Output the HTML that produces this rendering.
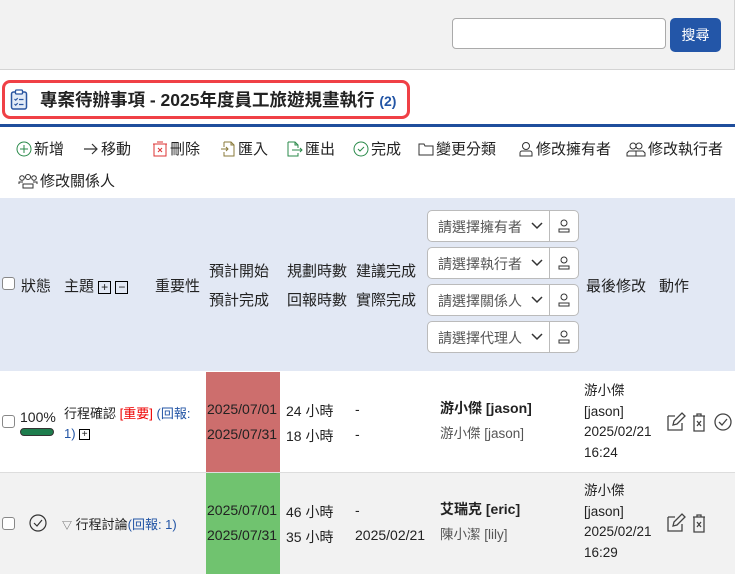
<!DOCTYPE html>
<html><head><meta charset="utf-8"><style>
*{box-sizing:border-box;margin:0;padding:0}
body{width:735px;height:574px;overflow:hidden;background:#fff;font-family:"Liberation Sans","Noto Sans CJK TC",sans-serif;font-size:15px;color:#222;position:relative}
.a{position:absolute;white-space:nowrap}
.cb{position:absolute;width:13px;height:13px;border:1px solid #888;border-radius:3px;background:#fff}
.sel{position:absolute;left:427px;width:152px;height:32px;border:1px solid #bbb;border-radius:5px;background:#fff}
.sel span{position:absolute;left:10px;top:6px;color:#555;font-size:14px}
.sel .dv{position:absolute;left:121px;top:0;width:1px;height:30px;background:#bbb}
.sel svg{position:absolute}
.sq{display:inline-block;width:13px;height:13px;border:1px solid #000;font-size:12px;line-height:10px;text-align:center;vertical-align:middle}
.bl{color:#2355a5}
.tb{position:absolute;white-space:nowrap;font-size:15px}
.tb svg{vertical-align:-3px;margin-right:2px}
.d{font-size:14px}
</style></head><body>
<div class="a" style="left:0;top:0;width:735px;height:70px;background:#f2f2f2;border-bottom:1px solid #d4d4d4;border-right:1px solid #d4d4d4"></div>
<div class="a" style="left:452px;top:18px;width:214px;height:31px;background:#fff;border:1px solid #aaa;border-radius:4px"></div>
<div class="a" style="left:670px;top:18px;width:51px;height:34px;background:#2356a8;border-radius:5px;color:#fff;font-size:14px;text-align:center;line-height:34px">搜尋</div>

<div class="a" style="left:2px;top:80px;width:408px;height:39px;border:3px solid #f04046;border-radius:8px"></div>
<svg class="a" style="left:10px;top:89px" width="18" height="22" viewBox="0 0 18 22"><rect x="1.5" y="3" width="15" height="17" rx="2" fill="#e3ebf7" stroke="#2a55a0" stroke-width="1.5"/><rect x="5.5" y="1" width="7" height="4" rx="1" fill="#fff" stroke="#2a55a0" stroke-width="1.3"/><path d="M4.5 10l1.2 1.2 2-2M4.5 15l1.2 1.2 2-2M9 10.5h4.5M9 15.5h4.5" stroke="#2a55a0" stroke-width="1.2" fill="none"/></svg>
<div class="a" style="left:40px;top:87px;font-size:17.5px;font-weight:bold;color:#222">專案待辦事項 - 2025年度員工旅遊規畫執行 <span class="bl" style="font-size:14px">(2)</span></div>
<div class="a" style="left:0;top:124px;width:735px;height:3px;background:#1f4e9c"></div>

<!-- toolbar -->
<div class="tb" style="left:16px;top:138px"><svg width="16" height="16"><circle cx="8" cy="8" r="7" stroke="#2a8a4a" fill="none"/><path d="M8 4v8M4 8h8" stroke="#2a8a4a"/></svg>新增</div>
<div class="tb" style="left:83px;top:138px"><svg width="16" height="16"><path d="M1 8h13M9 3l5 5-5 5" stroke="#333" stroke-width="1.2" fill="none"/></svg>移動</div>
<div class="tb" style="left:152px;top:138px"><svg width="16" height="16"><rect x="2" y="3" width="12" height="12" stroke="#d33" fill="none"/><path d="M5 1h6M1 3h14M6 7l4 4M10 7l-4 4" stroke="#d33" fill="none"/></svg>刪除</div>
<div class="tb" style="left:220px;top:138px"><svg width="16" height="16"><path d="M4 1h7l3 3v11H4v-4M4 6V1M11 1v3h3M1 8h7M6 6l2 2-2 2" stroke="#8a7a3a" fill="none"/></svg>匯入</div>
<div class="tb" style="left:286px;top:138px"><svg width="17" height="16"><path d="M2 1h7l3 3v3M2 1v14h10v-3M9 1v3h3M6 9h10M14 7l2 2-2 2" stroke="#2a8a4a" fill="none"/></svg>匯出</div>
<div class="tb" style="left:353px;top:138px"><svg width="16" height="16"><circle cx="8" cy="8" r="7" stroke="#2a8a4a" fill="none"/><path d="M5 8l2 2 4-4" stroke="#2a8a4a" fill="none"/></svg>完成</div>
<div class="tb" style="left:418px;top:138px"><svg width="16" height="16"><path d="M1 3h5l1 2h8v9H1z" stroke="#333" fill="none"/></svg>變更分類</div>
<div class="tb" style="left:518px;top:138px"><svg width="16" height="16"><circle cx="8" cy="5" r="3.5" stroke="#333" fill="none"/><path d="M2 15v-3a2 2 0 0 1 2-2h8a2 2 0 0 1 2 2v3z" stroke="#333" fill="none"/></svg>修改擁有者</div>
<div class="tb" style="left:626px;top:138px"><svg width="20" height="16"><circle cx="7" cy="5" r="3" stroke="#333" fill="none"/><circle cx="13" cy="5" r="3" stroke="#333" fill="none"/><path d="M1 15v-3l2-2h14l2 2v3zM10 10v5" stroke="#333" fill="none"/></svg>修改執行者</div>
<div class="tb" style="left:18px;top:170px"><svg width="20" height="16"><circle cx="4" cy="5" r="2.3" stroke="#333" fill="none"/><circle cx="10" cy="4" r="2.5" stroke="#333" fill="none"/><circle cx="16" cy="5" r="2.3" stroke="#333" fill="none"/><path d="M1 11v-2h4M19 11v-2h-4M5 15v-4h10v4z" stroke="#333" fill="none"/></svg>修改關係人</div>

<!-- header -->
<div class="a" style="left:0;top:198px;width:735px;height:173px;background:#e2e8f4"></div>
<div class="cb" style="left:2px;top:277px"></div>
<div class="a" style="left:21px;top:275px">狀態</div>
<div class="a" style="left:64px;top:275px">主題 <span class="sq">+</span> <span class="sq">−</span></div>
<div class="a" style="left:155px;top:275px">重要性</div>
<div class="a" style="left:209px;top:260px">預計開始</div>
<div class="a" style="left:209px;top:289px">預計完成</div>
<div class="a" style="left:287px;top:260px">規劃時數</div>
<div class="a" style="left:287px;top:289px">回報時數</div>
<div class="a" style="left:356px;top:260px">建議完成</div>
<div class="a" style="left:356px;top:289px">實際完成</div>
<div class="a" style="left:586px;top:275px">最後修改</div>
<div class="a" style="left:659px;top:275px">動作</div>

<div class="sel" style="top:210px"><span>請選擇擁有者</span><div class="dv"></div><svg style="left:103px;top:11px" width="12" height="8"><path d="M1 1l5 5 5-5" stroke="#333" stroke-width="1.5" fill="none"/></svg><svg style="left:129px;top:8px" width="14" height="15"><circle cx="7" cy="4" r="3" stroke="#333" fill="none"/><path d="M2 13v-3h10v3z" stroke="#333" fill="none"/></svg></div>
<div class="sel" style="top:247px"><span>請選擇執行者</span><div class="dv"></div><svg style="left:103px;top:11px" width="12" height="8"><path d="M1 1l5 5 5-5" stroke="#333" stroke-width="1.5" fill="none"/></svg><svg style="left:129px;top:8px" width="14" height="15"><circle cx="7" cy="4" r="3" stroke="#333" fill="none"/><path d="M2 13v-3h10v3z" stroke="#333" fill="none"/></svg></div>
<div class="sel" style="top:284px"><span>請選擇關係人</span><div class="dv"></div><svg style="left:103px;top:11px" width="12" height="8"><path d="M1 1l5 5 5-5" stroke="#333" stroke-width="1.5" fill="none"/></svg><svg style="left:129px;top:8px" width="14" height="15"><circle cx="7" cy="4" r="3" stroke="#333" fill="none"/><path d="M2 13v-3h10v3z" stroke="#333" fill="none"/></svg></div>
<div class="sel" style="top:321px"><span>請選擇代理人</span><div class="dv"></div><svg style="left:103px;top:11px" width="12" height="8"><path d="M1 1l5 5 5-5" stroke="#333" stroke-width="1.5" fill="none"/></svg><svg style="left:129px;top:8px" width="14" height="15"><circle cx="7" cy="4" r="3" stroke="#333" fill="none"/><path d="M2 13v-3h10v3z" stroke="#333" fill="none"/></svg></div>

<!-- row1 -->
<div class="a" style="left:0;top:472px;width:735px;height:1px;background:#ddd"></div>
<div class="a" style="left:206px;top:372px;width:74px;height:100px;background:#cd6e6d"></div>
<div class="cb" style="left:2px;top:415px"></div>
<div class="a" style="left:20px;top:409px;font-size:14px">100%</div>
<div class="a" style="left:20px;top:428px;width:34px;height:8px;background:#1e7d4d;border:1px solid #333;border-radius:4px"></div>
<div class="a" style="left:64px;top:403px;font-size:13px">行程確認 <span style="color:#e00">[重要]</span> <span class="bl">(回報:</span></div>
<div class="a" style="left:64px;top:426px;font-size:13px"><span class="bl">1)</span> <span class="sq" style="width:11px;height:11px;font-size:10px;line-height:9px">+</span></div>
<div class="a d" style="left:207px;top:401px">2025/07/01</div>
<div class="a d" style="left:207px;top:426px">2025/07/31</div>
<div class="a d" style="left:286px;top:401px">24 小時</div>
<div class="a d" style="left:286px;top:426px">18 小時</div>
<div class="a d" style="left:355px;top:401px">-</div>
<div class="a d" style="left:355px;top:426px">-</div>
<div class="a" style="left:440px;top:398px;font-size:14px;font-weight:bold">游小傑 [jason]</div>
<div class="a" style="left:440px;top:422px;font-size:13.5px;color:#555">游小傑 [jason]</div>
<div class="a" style="left:584px;top:381px;font-size:13.5px;line-height:20.5px">游小傑<br>[jason]<br>2025/02/21<br>16:24</div>
<svg class="a" style="left:666px;top:412px" width="68" height="20"><path d="M2 4h7M2 4v14h14v-7M7 13l1-4 8-8 3 3-8 8z" stroke="#444" stroke-width="1.3" fill="none"/><path d="M27 4h12M31 4V2h4v2M28 4v15h10V4M31 9l4 5M35 9l-4 5" stroke="#444" stroke-width="1.3" fill="none"/><circle cx="57" cy="10" r="8" stroke="#444" stroke-width="1.3" fill="none"/><path d="M53 10l3 3 5-6" stroke="#444" stroke-width="1.3" fill="none"/></svg>

<!-- row2 -->
<div class="a" style="left:0;top:473px;width:735px;height:101px;background:#f2f2f2"></div>
<div class="a" style="left:206px;top:473px;width:74px;height:101px;background:#70c36f"></div>
<div class="cb" style="left:2px;top:517px"></div>
<svg class="a" style="left:29px;top:514px" width="18" height="18"><circle cx="9" cy="9" r="8" stroke="#333" stroke-width="1.2" fill="none"/><path d="M5 9l3 3 5-6" stroke="#333" stroke-width="1.2" fill="none"/></svg>
<div class="a" style="left:62px;top:514px;font-size:13px"><span style="font-size:10px;color:#555">▽</span> 行程討論<span class="bl">(回報: 1)</span></div>
<div class="a d" style="left:207px;top:502px">2025/07/01</div>
<div class="a d" style="left:207px;top:527px">2025/07/31</div>
<div class="a d" style="left:286px;top:502px">46 小時</div>
<div class="a d" style="left:286px;top:527px">35 小時</div>
<div class="a d" style="left:355px;top:502px">-</div>
<div class="a d" style="left:355px;top:527px">2025/02/21</div>
<div class="a" style="left:440px;top:499px;font-size:14px;font-weight:bold">艾瑞克 [eric]</div>
<div class="a" style="left:440px;top:523px;font-size:13.5px;color:#555">陳小潔 [lily]</div>
<div class="a" style="left:584px;top:481px;font-size:13.5px;line-height:20.5px">游小傑<br>[jason]<br>2025/02/21<br>16:29</div>
<svg class="a" style="left:666px;top:513px" width="44" height="20"><path d="M2 4h7M2 4v14h14v-7M7 13l1-4 8-8 3 3-8 8z" stroke="#444" stroke-width="1.3" fill="none"/><path d="M27 4h12M31 4V2h4v2M28 4v15h10V4M31 9l4 5M35 9l-4 5" stroke="#444" stroke-width="1.3" fill="none"/></svg>
</body></html>
